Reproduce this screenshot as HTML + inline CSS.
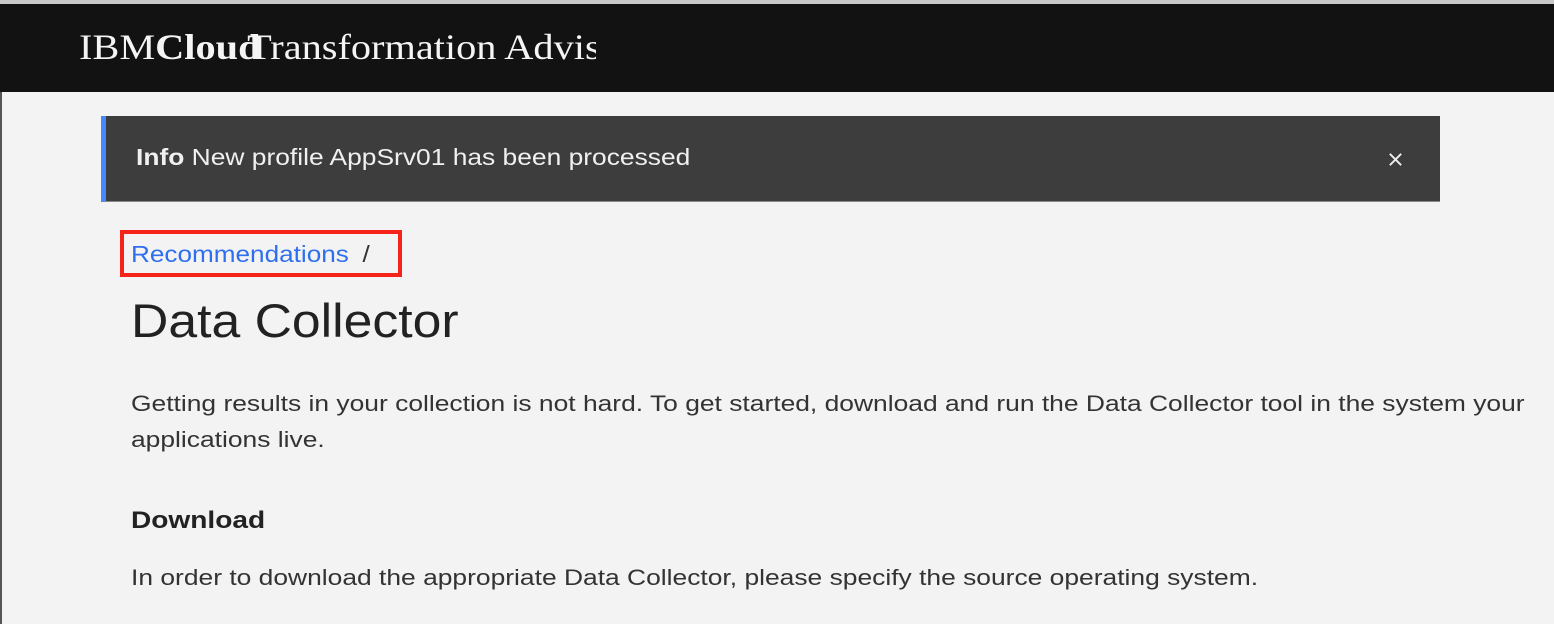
<!DOCTYPE html>
<html><head><style>
*{margin:0;padding:0;box-sizing:border-box}
body{width:1554px;height:624px;overflow:hidden;background:#f3f3f3;font-family:"Liberation Sans",sans-serif;position:relative;color:#222}
.top{position:absolute;left:0;top:0;width:1554px;height:4px;background:#c8c8c8}
.hdr{position:absolute;left:0;top:4px;width:1554px;height:88px;background:#121212}
.brand{position:absolute;left:79px;top:22px;width:517px;overflow:hidden;white-space:nowrap;font-family:"Liberation Serif",serif;font-size:36px;color:#f4f4f4}
.brand div{transform:scaleX(1.12);transform-origin:left}
.brand b{margin-right:-12px}
.edge{position:absolute;left:0;top:92px;width:2px;height:532px;background:#555}
.note{position:absolute;left:101px;top:116px;width:1339px;height:86px;background:#3d3d3d;border-left:5px solid #4589ff;border-bottom:1px solid #888}
.note span{position:absolute;left:30px;top:28px;font-size:23px;color:#f0f0f0;white-space:nowrap;transform:scaleX(1.147);transform-origin:left}
.x{position:absolute;left:1387px;top:151px;width:17px;height:17px}
.crumb{position:absolute;left:120px;top:230px;width:282px;height:47px;border:4px solid #f5231a}
.crumb span{position:absolute;left:7px;top:7px;font-size:23px;color:#2f6fef;white-space:nowrap;transform:scaleX(1.136);transform-origin:left}
.crumb i{font-style:normal;color:#333;margin-left:12px}
h1{position:absolute;left:131px;top:293px;font-size:47px;font-weight:300;color:#222;white-space:nowrap;transform:scaleX(1.1);transform-origin:left}
.p{position:absolute;left:131px;font-size:22px;color:#333;line-height:36px;white-space:nowrap;transform:scaleX(1.2);transform-origin:left}
h2{position:absolute;left:131px;top:507px;font-size:24px;font-weight:bold;color:#222;transform:scaleX(1.17);transform-origin:left}
</style></head><body>
<div class="top"></div>
<div class="hdr"><div class="brand"><div>IBM<b>Cloud</b>Transformation Advisor</div></div></div>
<div class="edge"></div>
<div class="note"><span><b>Info</b> New profile AppSrv01 has been processed</span></div>
<svg class="x" viewBox="0 0 18 18"><path d="M3 3L15 15M15 3L3 15" stroke="#eee" stroke-width="2"/></svg>
<div class="crumb"><span>Recommendations<i>/</i></span></div>
<h1>Data Collector</h1>
<div class="p" style="top:386px">Getting results in your collection is not hard. To get started, download and run the Data Collector tool in the system your<br>applications live.</div>
<h2>Download</h2>
<div class="p" style="top:560px">In order to download the appropriate Data Collector, please specify the source operating system.</div>
</body></html>
